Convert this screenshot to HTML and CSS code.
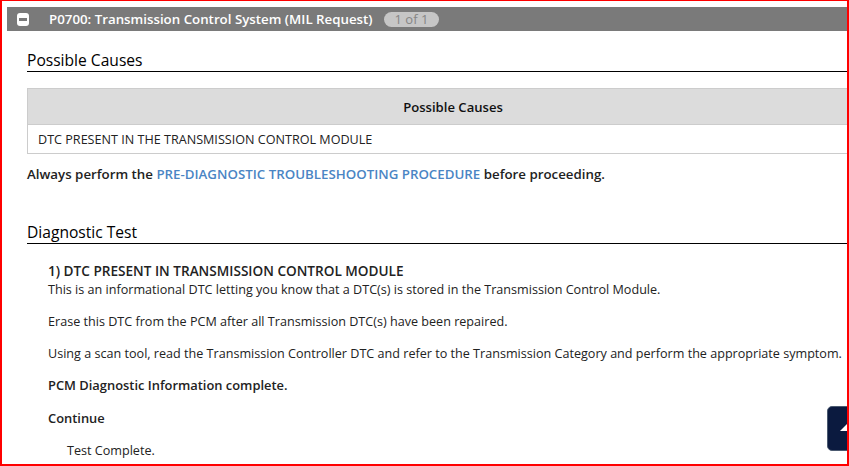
FILE: index.html
```html
<!DOCTYPE html>
<html lang="en">

<head>
    <meta charset="UTF-8" />
    <title>P0700 Transmission Control System</title>
    <link rel="stylesheet" href="styles.css">
</head>

<body>
    <div class="frame">
        <div class="dtc-bar">
            <span class="toggle"><span class="toggle-line"></span></span>
            <span class="dtc-title">P0700: Transmission Control System (MIL Request)</span>
            <span class="count">1 of 1</span>
        </div>

        <div class="section causes-section">
            <h2>Possible Causes</h2>
            <table class="causes">
                <tr>
                    <th>Possible Causes</th>
                </tr>
                <tr>
                    <td>DTC PRESENT IN THE TRANSMISSION CONTROL MODULE</td>
                </tr>
            </table>
            <p class="note">Always perform the <a href="#">PRE-DIAGNOSTIC TROUBLESHOOTING PROCEDURE</a> before proceeding.</p>
        </div>

        <div class="section test-section">
            <h2>Diagnostic Test</h2>
            <div class="test">
                <h3>1) DTC PRESENT IN TRANSMISSION CONTROL MODULE</h3>
                <p>This is an informational DTC letting you know that a DTC(s) is stored in the Transmission Control Module.</p>
                <p>Erase this DTC from the PCM after all Transmission DTC(s) have been repaired.</p>
                <p>Using a scan tool, read the Transmission Controller DTC and refer to the Transmission Category and perform the appropriate symptom.</p>
                <p class="strong">PCM Diagnostic Information complete.</p>
                <p class="strong continue">Continue</p>
                <p class="indent">Test Complete.</p>
            </div>
        </div>

        <!-- back to top -->
        <div class="to-top"><span class="arrow"></span></div>
    </div>
</body>

</html>
```

FILE: styles.css
```css
* {
    margin: 0;
    padding: 0;
    box-sizing: border-box;
}

body {
    font-family: "Open Sans", "Noto Sans", sans-serif;
    font-size: 12.6px;
    color: #222;
    background: #fff;
}

.frame {
    position: relative;
    width: 849px;
    height: 466px;
    border: 2px solid #f00;
    border-top-width: 1px;
    padding: 6px 0 0 5px;
    overflow: hidden;
}

/* DTC header bar */
.dtc-bar {
    display: flex;
    align-items: center;
    width: 900px;
    height: 24px;
    background: #7a7a7a;
    color: #fff;
    padding-left: 10px;
}

.toggle {
    width: 12px;
    height: 13px;
    background: #fff;
    border-radius: 3px;
    display: flex;
    align-items: center;
    justify-content: center;
}

.toggle-line {
    width: 8px;
    height: 3px;
    background: #7a7a7a;
}

.dtc-title {
    margin-left: 20px;
    font-weight: 600;
    font-size: 13.3px;
}

.count {
    margin-left: 11px;
    background: #c6c6c6;
    color: #858585;
    border-radius: 8px;
    padding: 0 11px;
    font-size: 13px;
    line-height: 15px;
}

/* sections */
.section {
    padding-left: 20px;
}

h2 {
    font-size: 15.6px;
    font-weight: 500;
    color: #000;
    border-bottom: 1px solid #000;
    width: 900px;
}

.causes-section h2 {
    line-height: 22px;
    margin-top: 18px;
}

.test-section h2 {
    line-height: 21px;
    margin-top: 38px;
}

.causes {
    width: 852px;
    margin-top: 16px;
    border-collapse: collapse;
}

.causes th {
    background: #dcdcdc;
    height: 36px;
    border: 1px solid #ccc;
    font-weight: 600;
    font-size: 13.1px;
    color: #111;
}

.causes td {
    height: 29px;
    border: 1px solid #ccc;
    padding-left: 10px;
}

.note {
    margin-top: 11px;
    font-weight: 600;
    font-size: 13.3px;
    line-height: 19px;
}

.note a {
    color: #4a85c4;
    text-decoration: none;
}

.test {
    padding: 17px 0 0 21px;
    line-height: 19px;
}

.test h3 {
    font-size: 13.6px;
    font-weight: 600;
}

.test p + p {
    margin-top: 13px;
}

.test .strong {
    font-weight: 600;
    font-size: 12.9px;
}

.test .continue {
    margin-top: 14px;
}

.test .indent {
    padding-left: 19px;
}

/* back to top button */
.to-top {
    position: absolute;
    left: 825px;
    top: 405px;
    width: 40px;
    height: 45px;
    background: #0b1a3f;
    border: 1px solid #4b5a70;
    border-radius: 5px;
}

.arrow {
    position: absolute;
    left: 12px;
    top: 14px;
    width: 0;
    height: 0;
    border-left: 10px solid transparent;
    border-right: 10px solid transparent;
    border-bottom: 10px solid #fff;
}
```
